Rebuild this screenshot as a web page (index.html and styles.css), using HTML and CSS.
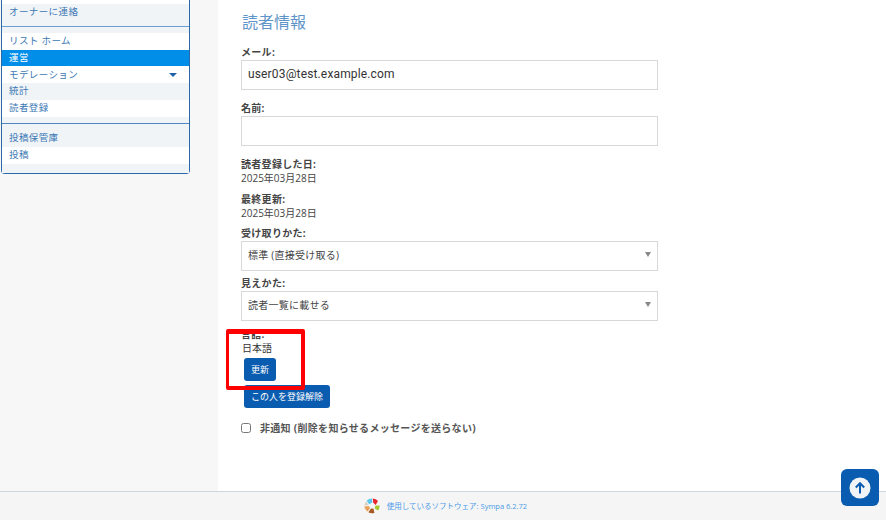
FILE: index.html
```html
<!DOCTYPE html>
<html lang="ja">
<head>
<meta charset="utf-8">
<title>読者情報</title>
<link rel="stylesheet" href="styles.css">
</head>
<body>
<div class="page">
  <div class="columns">
    <aside class="sidebar">
      <nav class="panel">
        <ul class="group first">
          <li class="item alt">オーナーに連絡</li>
        </ul>
        <ul class="group second">
          <li class="item">リスト ホーム</li>
          <li class="item active">運営</li>
          <li class="item split">モデレーション<span class="caret"></span></li>
          <li class="item alt">統計</li>
          <li class="item">読者登録</li>
        </ul>
        <ul class="group third">
          <li class="item alt tall">投稿保管庫</li>
          <li class="item">投稿</li>
        </ul>
      </nav>
    </aside>
    <main class="main">
      <h2 class="title">読者情報</h2>
      <label class="label first-label">メール:</label>
      <input class="field" type="text" value="user03@test.example.com">
      <label class="label name-label">名前:</label>
      <input class="field" type="text">
      <div class="label info-label">読者登録した日:</div>
      <div class="value">2025年03月28日</div>
      <div class="label info-label second-info">最終更新:</div>
      <div class="value">2025年03月28日</div>
      <div class="label select-label">受け取りかた:</div>
      <div class="select"><span>標準 (直接受け取る)</span><span class="select-arrow"></span></div>
      <div class="label select-label tight">見えかた:</div>
      <div class="select"><span>読者一覧に載せる</span><span class="select-arrow"></span></div>
      <div class="label lang-label">言語:</div>
      <div class="lang-value">日本語</div>
      <div class="buttons">
        <button class="btn" type="button">更新</button>
        <button class="btn" type="button">この人を登録解除</button>
      </div>
      <label class="check-row"><input class="check" type="checkbox"><span>非通知 (削除を知らせるメッセージを送らない)</span></label>
      <div class="highlight"></div>
    </main>
  </div>
  <footer class="footer">
    <svg class="logo" width="16" height="16" viewBox="0 0 16 16" aria-hidden="true">
      <path d="M2.6 2.8 Q5 0.6 8 0.6 L8.4 4.6 L5.2 6.2Z" fill="#5cc8ee"/>
      <path d="M8.8 0.6 Q12.2 0.8 14 3 L11.6 7 L9.2 4.6Z" fill="#e8262c"/>
      <path d="M15.6 7.4 Q15.6 10.6 14 12.6 L10.6 10.4 L11.6 7.6Z" fill="#a8c832"/>
      <path d="M10.4 15 Q7 15.8 4.4 14.2 L7 10.4 L9.6 10.8Z" fill="#a85a24"/>
      <path d="M3.6 13.6 Q0.8 11.4 0.4 8.4 L4.6 8 L6.2 10Z" fill="#e8a25c"/>
      <path d="M0.4 7.4 Q0.8 5 2.2 3.4 L4.6 7Z" fill="#d8d2c4"/>
    </svg>
    <span class="credit">使用しているソフトウェア: Sympa 6.2.72</span>
  </footer>
  <a class="to-top" href="#top" aria-label="上へ">
    <svg width="22" height="22" viewBox="0 0 22 22" aria-hidden="true">
      <circle cx="11" cy="11" r="10.5" fill="#f1f4f7"/>
      <path d="M11 16.5 V6.5 M6.8 10.5 L11 6.2 L15.2 10.5" fill="none" stroke="#0a5cb0" stroke-width="2"/>
    </svg>
  </a>
</div>
</body>
</html>
```
FILE: styles.css
```css
* { box-sizing: border-box; }
html, body { margin: 0; padding: 0; height: 100%; overflow: hidden; }
body {
  font-family: "Open Sans", "Noto Sans CJK JP", sans-serif;
  background: #fff;
  color: #333;
}
.page { position: relative; width: 886px; height: 520px; display: flex; flex-direction: column; overflow: hidden; }
.columns { display: flex; height: 491px; }
.sidebar { width: 218px; background: #f7f7f7; padding-left: 1px; }
.panel {
  width: 189px;
  height: 174px;
  background: #fff;
  border: 1px solid #2b68a8;
  border-top: 0;
  border-radius: 0 0 4px 4px;
  padding-top: 4px;
  display: flex;
  flex-direction: column;
}
.group { list-style: none; margin: 0; padding: 0; background: #f1f4f7; }
.first { height: 23px; border-bottom: 1px solid #6a9fd0; }
.second { height: 97px; padding-top: 6px; border-bottom: 1px solid #4f86c0; }
.third { flex: 1; }
.item {
  height: 17px;
  line-height: 15px;
  padding-left: 7px;
  font-size: 9.5px;
  letter-spacing: 0.4px;
  color: #3b78b4;
  background: #fff;
}
.item.alt { background: #f1f4f7; }
.item.tall { height: 23px; padding-top: 6px; }
.item.active { background: #008ee8; color: #fff; height: 16px; }
.split { display: flex; justify-content: space-between; align-items: center; padding-right: 12px; }
.caret { width: 0; height: 0; border-style: solid; border-width: 4px 4px 0; border-color: #1d62a8 transparent transparent; }
.main { position: relative; flex: 1; padding: 12px 0 0 23px; width: 440px; display: flex; flex-direction: column; align-items: flex-start; }
.title { margin: 0 0 0 1px; font-size: 16px; line-height: 20px; font-weight: 400; color: #5e95c8; }
.label { display: block; font-size: 10px; line-height: 14px; font-weight: 700; color: #444; letter-spacing: 0.3px; }
.first-label { margin-top: 13px; }
.name-label { margin-top: 11px; }
.field {
  width: 417px;
  height: 30px;
  margin-top: 1px;
  border: 1px solid #d8d8d8;
  background: #fff;
  padding: 0 6px 2px;
  font-family: Roboto, sans-serif;
  font-size: 12px;
  letter-spacing: 0.15px;
  color: #333;
  border-radius: 0;
  box-shadow: none;
}
.info-label { margin-top: 11px; }
.second-info { margin-top: 7px; }
.value { font-size: 10px; line-height: 14px; color: #444; }
.select-label { margin-top: 6px; }
.select-label.tight { margin-top: 5px; }
.select {
  width: 417px;
  height: 30px;
  margin-top: 1px;
  border: 1px solid #d8d8d8;
  background: #fff;
  padding: 0 6px 3px;
  display: flex;
  justify-content: space-between;
  align-items: center;
  font-size: 10px;
  letter-spacing: 0.25px;
  color: #444;
}
.select-arrow { width: 0; height: 0; border-style: solid; border-width: 5px 3px 0; border-color: #888 transparent transparent; }
.lang-label { margin-top: 6px; }
.lang-value { font-size: 10px; line-height: 14px; color: #333; margin-left: 1px; }
.buttons { display: flex; flex-direction: column; align-items: flex-start; gap: 4px; margin: 3px 0 0 3px; }
.btn {
  height: 23px;
  padding: 0 7px;
  border: 0;
  border-radius: 3px;
  background: #0a5cb0;
  color: #fff;
  font-family: inherit;
  font-size: 9px;
}
.check-row { display: flex; align-items: center; margin-top: 13px; font-size: 10px; line-height: 14px; font-weight: 700; letter-spacing: 0.3px; color: #555; }
.check { width: 10px; height: 10px; margin: 0 9px 0 0; }
.highlight { position: absolute; left: 8px; top: 329px; width: 79px; height: 61px; border-style: solid; border-color: #f00; border-width: 5px 4px 4px 3px; border-radius: 2px; pointer-events: none; }
.footer {
  flex: 1;
  background: #f5f5f5;
  border-top: 1px solid #ccd6e0;
  display: flex;
  align-items: center;
  justify-content: center;
  gap: 7px;
  padding-left: 5px;
  padding-bottom: 1px;
}
.logo { display: block; }
.credit { font-size: 7.5px; color: #4a9ae8; }
.to-top {
  position: absolute;
  left: 841px;
  top: 469px;
  width: 38px;
  height: 37px;
  border-radius: 6px;
  background: #0a5cb0;
  display: flex;
  align-items: center;
  justify-content: center;
}
```
